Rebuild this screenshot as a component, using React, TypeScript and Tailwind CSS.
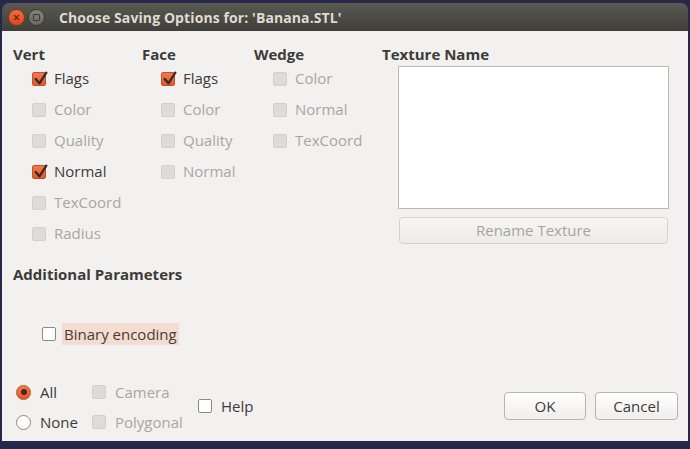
import React from 'react'

type Item = { label: string; checked?: boolean; disabled?: boolean }

const COLS: { title: string; width: string; items: Item[] }[] = [
  {
    title: 'Vert',
    width: 'w-[129px]',
    items: [
      { label: 'Flags', checked: true },
      { label: 'Color', disabled: true },
      { label: 'Quality', disabled: true },
      { label: 'Normal', checked: true },
      { label: 'TexCoord', disabled: true },
      { label: 'Radius', disabled: true },
    ],
  },
  {
    title: 'Face',
    width: 'w-[112px]',
    items: [
      { label: 'Flags', checked: true },
      { label: 'Color', disabled: true },
      { label: 'Quality', disabled: true },
      { label: 'Normal', disabled: true },
    ],
  },
  {
    title: 'Wedge',
    width: 'w-[128px]',
    items: [
      { label: 'Color', disabled: true },
      { label: 'Normal', disabled: true },
      { label: 'TexCoord', disabled: true },
    ],
  },
]

function Box({ checked, disabled }: { checked?: boolean; disabled?: boolean }) {
  if (checked) {
    return (
      <span className="relative w-[14px] h-[14px] rounded-[2px] border border-[#c24f28] bg-gradient-to-b from-[#f07a4e] to-[#e0582c] shrink-0">
        <svg viewBox="0 0 16 16" className="absolute -left-[1px] -top-[3px] w-[17px] h-[17px]">
          <path d="M3.5 8.5l3.5 4 6.5-10" stroke="#3a2a24" strokeWidth="2.2" fill="none" strokeLinecap="round" strokeLinejoin="round" />
        </svg>
      </span>
    )
  }
  if (disabled) {
    return <span className="w-[14px] h-[14px] rounded-[2px] border border-[#d3d0cb] bg-[#dfdcd8] shrink-0" />
  }
  return <span className="w-[14px] h-[14px] rounded-[2px] border border-[#8c8984] bg-white shrink-0" />
}

function Check({ label, checked, disabled }: Item) {
  return (
    <div className="flex items-center h-[31px] gap-[8px]">
      <Box checked={checked} disabled={disabled} />
      <span className={disabled ? 'text-[#aaa69f]' : 'text-[#3c3b37]'}>{label}</span>
    </div>
  )
}

function Radio({ label, checked }: { label: string; checked?: boolean }) {
  return (
    <div className="flex items-center h-[30px] gap-[9px]">
      {checked ? (
        <span className="w-[15px] h-[15px] rounded-full border border-[#c24f28] bg-gradient-to-b from-[#f07a4e] to-[#e0582c] flex items-center justify-center">
          <span className="w-[6px] h-[6px] rounded-full bg-[#4a2a1e]" />
        </span>
      ) : (
        <span className="w-[15px] h-[15px] rounded-full border border-[#8c8984] bg-white" />
      )}
      <span className="text-[#3c3b37]">{label}</span>
    </div>
  )
}

export default function App() {
  return (
    <div
      className="w-[690px] h-[449px] bg-[#27274a] pt-[3px] pl-[2px] overflow-hidden text-[15px]"
      style={{ fontFamily: '"Open Sans", "Noto Sans", sans-serif' }}
    >
      <div className="w-[686px] rounded-t-[7px] overflow-hidden">
        {/* title bar */}
        <div className="h-[28px] bg-gradient-to-b from-[#5b5952] to-[#3f3e39] flex items-center pl-[6px]">
          <span className="w-[17px] h-[17px] rounded-full bg-gradient-to-b from-[#f26d3d] to-[#d9491c] border border-[#8e3216] flex items-center justify-center">
            <svg viewBox="0 0 10 10" className="w-[7px] h-[7px]">
              <path d="M2 2l6 6M8 2l-6 6" stroke="#5a1c0a" strokeWidth="1.6" strokeLinecap="round" />
            </svg>
          </span>
          <span className="ml-[3px] w-[17px] h-[17px] rounded-full bg-gradient-to-b from-[#85827b] to-[#6a6862] border border-[#3a3935] flex items-center justify-center">
            <span className="w-[7px] h-[7px] border border-[#3a3935] rounded-[1px]" />
          </span>
          <span className="ml-[14px] text-[14px] font-bold text-[#dfdbd2] tracking-[0.1px]">
            Choose Saving Options for: 'Banana.STL'
          </span>
        </div>

        {/* body */}
        <div className="h-[410px] bg-[#f2f1f0] pl-[11px] pt-[14px] flex flex-col">
          <div className="flex h-[203px]">
            {COLS.map((col) => (
              <div key={col.title} className={col.width}>
                <div className="h-[18px] leading-[18px] font-bold text-[#3c3b37]">{col.title}</div>
                <div className="pl-[19px]">
                  {col.items.map((it) => (
                    <Check key={it.label} {...it} />
                  ))}
                </div>
              </div>
            ))}
            <div className="flex flex-col">
              <div className="h-[18px] leading-[18px] font-bold text-[#3c3b37]">Texture Name</div>
              <div className="ml-[16px] mt-[3px] w-[271px] h-[143px] bg-white border border-[#bdbab5]" />
              <div className="ml-[17px] mt-[8px] w-[269px] h-[27px] rounded-[4px] border border-[#d6d3cf] bg-gradient-to-b from-[#f7f6f5] to-[#ecebe9] flex items-center justify-center text-[#a8a49e]">
                Rename Texture
              </div>
            </div>
          </div>

          <div className="mt-[17px] h-[18px] leading-[18px] font-bold text-[#3c3b37]">Additional Parameters</div>

          <div className="mt-[40px] ml-[29px] flex items-center h-[22px]">
            <Box />
            <span className="ml-[6px] h-[22px] leading-[22px] px-[2px] bg-[#f4dcd1] text-[#4a3b36]">Binary encoding</span>
          </div>

          <div className="mt-[32px] flex items-start">
            <div className="ml-[3px] w-[76px]">
              <Radio label="All" checked />
              <Radio label="None" />
            </div>
            <div className="w-[106px]">
              <div className="flex items-center h-[30px] gap-[9px]">
                <Box disabled />
                <span className="text-[#aaa69f]">Camera</span>
              </div>
              <div className="flex items-center h-[30px] gap-[9px]">
                <Box disabled />
                <span className="text-[#aaa69f]">Polygonal</span>
              </div>
            </div>
            <div className="mt-[19px] flex items-center h-[20px] gap-[9px]">
              <Box />
              <span className="text-[#3c3b37]">Help</span>
            </div>
            <div className="ml-auto mr-[10px] mt-[15px] flex gap-[9px]">
              <div className="w-[82px] h-[28px] rounded-[4px] border border-[#b8b5b0] bg-gradient-to-b from-white to-[#efeeec] flex items-center justify-center text-[#3c3b37]">
                OK
              </div>
              <div className="w-[83px] h-[28px] rounded-[4px] border border-[#b8b5b0] bg-gradient-to-b from-white to-[#efeeec] flex items-center justify-center text-[#3c3b37]">
                Cancel
              </div>
            </div>
          </div>
        </div>
      </div>
    </div>
  )
}
